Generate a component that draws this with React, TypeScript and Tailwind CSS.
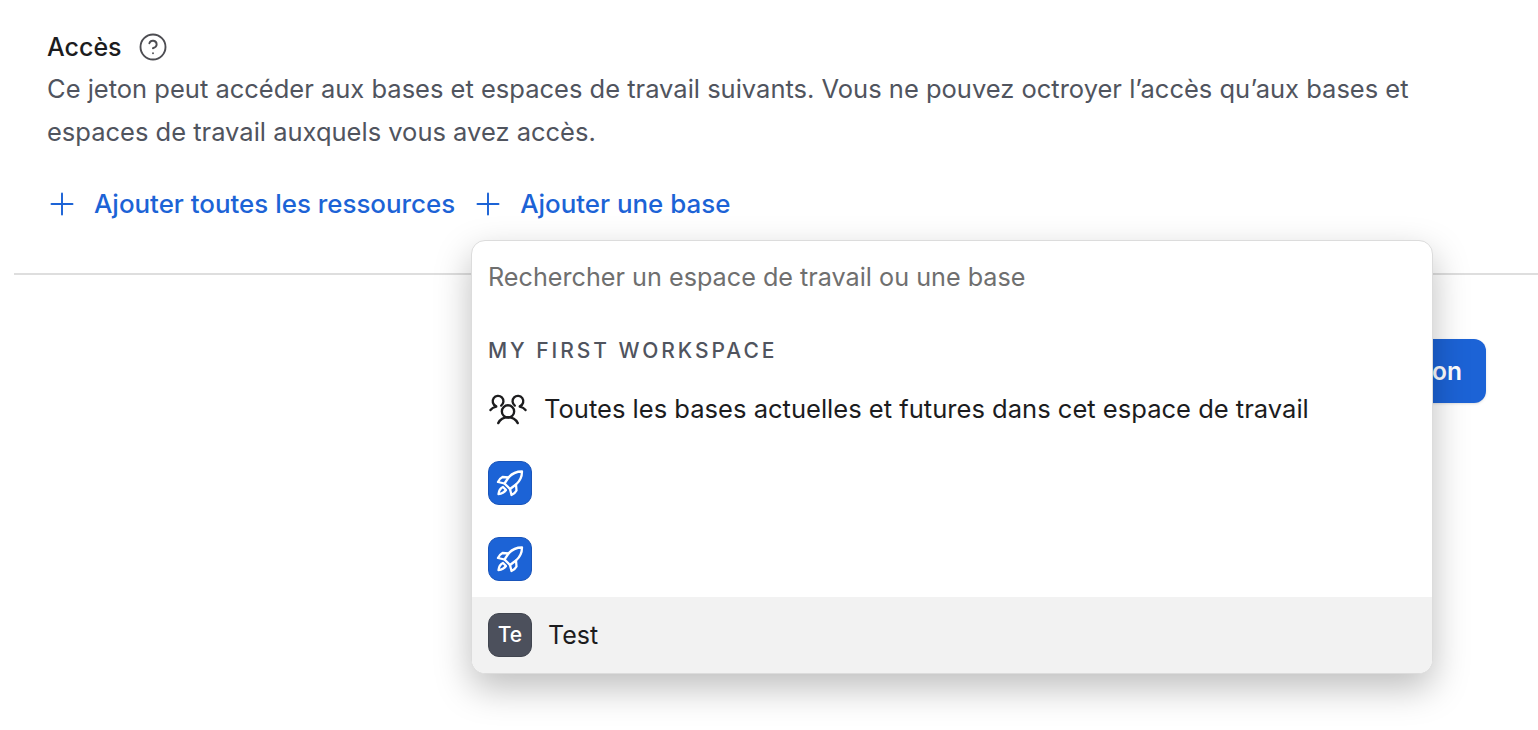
import { CircleHelp, Plus } from "lucide-react";

function RocketIcon() {
  return (
    <svg width="28" height="28" viewBox="0 0 28 28" fill="none" stroke="#fff" strokeWidth="2.300" strokeLinejoin="round" strokeLinecap="round">
      {/* body and fins */}
      <path d="M26 2.500C20 2.500 15.500 5 12.500 8.500L6.500 8Q3.500 9.500 2 13L8.500 14.500L14 20L15.500 26Q19 24.500 20.500 21.500L20 15.500C23.500 12.500 26 8 26 2.500z" />
      <path d="M12.500 8.500L8.500 14.500M20 15.500L14 20" />
      {/* flame */}
      <path d="M7 18Q3 20 2.500 25Q7.500 24.500 10 21z" />
    </svg>
  );
}

function PeopleIcon() {
  return (
    <svg width="40" height="32" viewBox="0 0 41 32" fill="none" stroke="#1c1c1e" strokeWidth="2.400" strokeLinecap="round">
      <circle cx="20.500" cy="18.500" r="6.300" />
      <path d="M10.500 30.500c2-4 5.500-6 10-6s8 2 10 6" />
      <path d="M13.500 12.500A5.500 5.500 0 1 0 8 13" />
      <path d="M8.500 13.500C6 14 4 15 2.500 17" />
      <path d="M27.500 12.500A5.500 5.500 0 1 1 33 13" />
      <path d="M32.500 13.500C35 14 37 15 38.500 17" />
    </svg>
  );
}

function BaseRow({ active, children }: { active?: boolean; children: React.ReactNode }) {
  return (
    <div className={`flex h-[76px] items-center gap-[16px] px-4 ${active ? "bg-[#f2f2f2]" : ""}`}>
      {children}
    </div>
  );
}

function RocketTile() {
  return (
    <div className="flex h-11 w-11 items-center justify-center rounded-[11px] border border-[#1a55ba] bg-[#1c63d6]">
      <RocketIcon />
    </div>
  );
}

export default function App() {
  return (
    <div className="relative h-[730px] overflow-hidden bg-white font-['Inter',sans-serif] text-[#1c1c1e]">
      <section className="pb-[47px] pl-[47px] pr-[100px] pt-[26px]">
        <div className="flex h-[41px] items-center gap-[16px] font-medium">
          <span className="pt-[2px] text-[25px]">Accès</span>
          <CircleHelp size={30} strokeWidth={1.500} className="text-[#4d4d52]" />
        </div>
        <p className="w-[1420px] text-[25.500px] leading-[43px] text-[#50545e]">
          Ce jeton peut accéder aux bases et espaces de travail suivants. Vous ne pouvez octroyer l’accès qu’aux bases et
          <br />
          espaces de travail auxquels vous avez accès.
        </p>
        <div className="-ml-[3px] mt-[29px] flex h-[44px] items-center gap-[15px] text-[25.900px] font-medium text-[#1c63d6]">
          <a className="flex items-center gap-[14px]">
            <Plus size={36} strokeWidth={1.300} />
            Ajouter toutes les ressources
          </a>
          <a className="flex items-center gap-[14px]">
            <Plus size={36} strokeWidth={1.300} />
            Ajouter une base
          </a>
        </div>
      </section>

      <div className="ml-[14px] h-[2px] bg-[#dedede]" />

      <div className="mr-[52px] mt-[64px] flex justify-end">
        <button className="h-[64px] rounded-xl bg-[#1c63d6] px-6 text-[24.500px] font-semibold text-white shadow-sm">
          Créer un jeton
        </button>
      </div>

      <div className="absolute left-[471px] top-[240px] w-[962px] overflow-hidden rounded-[14px] border border-[#dcdcdc] bg-white shadow-[0_14px_36px_rgba(0,0,0,0.26)]">
        <div className="flex h-[73px] items-center px-4 text-[25.200px] text-[#6f6f6f]">
          Rechercher un espace de travail ou une base
        </div>
        <div className="mb-[3px] mt-[18px] flex h-[38px] items-center px-4 text-[21px] font-medium tracking-[0.14em] text-[#50545e]">
          MY FIRST WORKSPACE
        </div>
        <div className="flex h-[72px] items-center gap-[16px] px-4 text-[25.550px]">
          <PeopleIcon />
          Toutes les bases actuelles et futures dans cet espace de travail
        </div>
        <BaseRow><RocketTile /></BaseRow>
        <BaseRow><RocketTile /></BaseRow>
        <BaseRow active>
          <div className="flex h-11 w-11 items-center justify-center rounded-[11px] border border-[#41454f] bg-[#4c505c] text-[21px] font-medium text-white">
            Te
          </div>
          <span className="pt-[2px] text-[25px]">Test</span>
        </BaseRow>
      </div>
    </div>
  );
}
